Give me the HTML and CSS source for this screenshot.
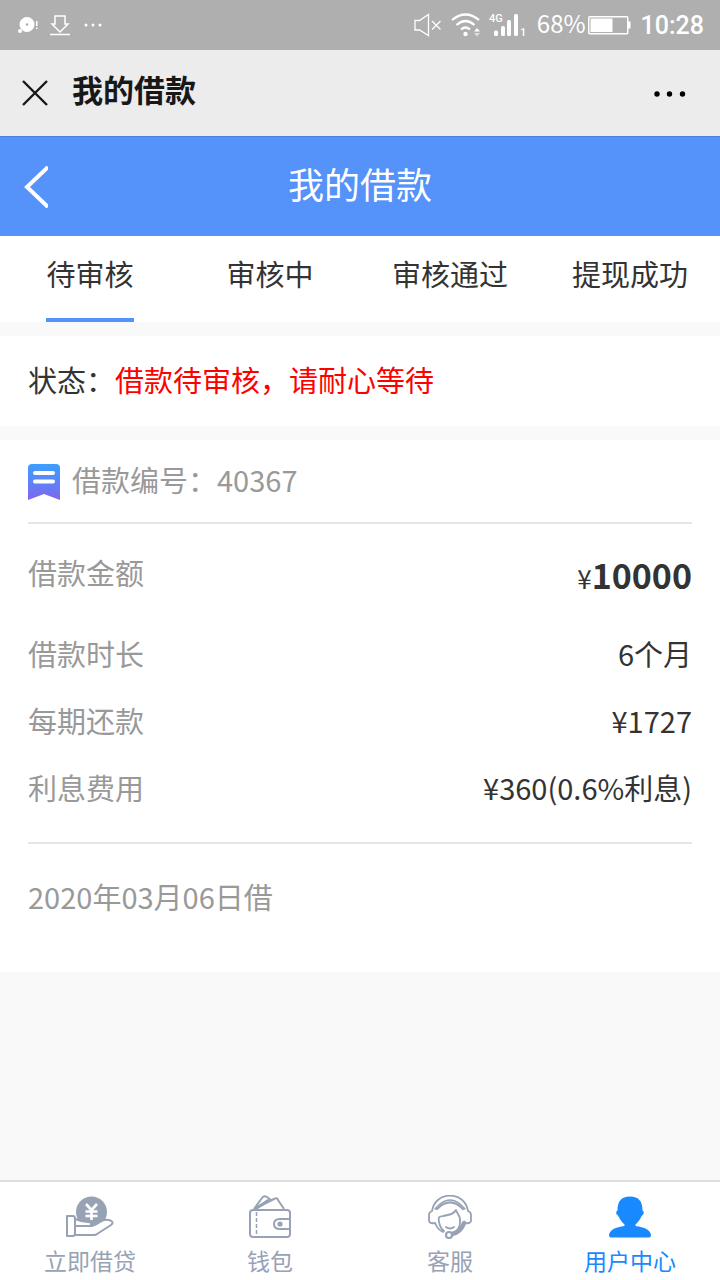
FILE: index.html
```html
<!DOCTYPE html>
<html lang="zh-CN">
<head>
<meta charset="utf-8">
<meta name="viewport" content="width=device-width, initial-scale=1">
<title>我的借款</title>
<link rel="stylesheet" href="styles.css">
</head>
<body>
<div class="page">
  <div class="status">
    <div class="status-left">
      <svg width="24" height="24" viewBox="0 0 24 24" fill="#fff"><path fill-rule="evenodd" d="M11 4a7.500 7.500 0 1 1 0 15a7.500 7.500 0 1 1 0-15zM11 10.200a1.300 1.300 0 1 0 0 2.600a1.300 1.300 0 1 0 0-2.600z"/><circle cx="4" cy="18" r="2"/><path d="M20 8h1.500v5H20zM20 14.500h1.500V16H20z"/></svg>
      <svg width="20" height="22" viewBox="0 0 20 22" fill="none" stroke="#fff" stroke-width="1.500"><path d="M5 2h10v8h3l-8 8-8-8h3zM0 20.500h20"/></svg>
      <svg width="18" height="6" viewBox="0 0 18 6" fill="#fff"><circle cx="2" cy="3" r="1.500"/><circle cx="9" cy="3" r="1.500"/><circle cx="16" cy="3" r="1.500"/></svg>
    </div>
    <div class="status-right">
      <svg width="28" height="24" viewBox="0 0 28 24" fill="none" stroke="#fff" stroke-width="1.300"><path d="M1 7.500h4.500L14.500 1.500v21L5.500 17H1zM18 8l8.500 8.500M26.500 8L18 16.500"/></svg>
      <svg class="wifi" width="30" height="24" viewBox="0 0 30 24" fill="none" stroke="#fff" stroke-width="2.200"><path d="M1 7q13.500-11 27 0M5.500 12q9-8 18 0M10 16.500q4.500-4 9 0"/><circle cx="14.500" cy="21" r="2.200" fill="#fff" stroke="none"/><path d="M23 18.500l3-3.500 3 3.500z" fill="#fff" stroke="none"/><path d="M23 20l3 3.500 3-3.500z" fill="#ddd" stroke="none"/></svg>
      <svg class="signal" width="38" height="26" viewBox="0 0 38 26" fill="#fff"><text x="0" y="10" class="signal-text">4G</text><rect x="5" y="18.500" width="4" height="5.500" rx="1.500"/><rect x="12" y="14" width="4" height="10" rx="1.500"/><rect x="18" y="8" width="4" height="16" rx="1.500"/><rect x="25" y="2" width="4" height="22" rx="1.500"/><text x="31" y="24" class="signal-text">1</text></svg>
      <span class="percent">68%</span>
      <svg width="43" height="20" viewBox="0 0 43 20"><rect x=".750" y="1.750" width="39" height="17" rx="1" fill="none" stroke="#fff" stroke-width="1.500"/><path fill="#fff" d="M2.500 3.500h22v13.500h-22zM40 6.500h2.500v7H40z"/></svg>
      <time class="clock">10:28</time>
    </div>
  </div>

  <header class="titlebar">
    <button class="icon-button" aria-label="关闭"><svg width="26" height="26" viewBox="0 0 26 26" stroke="#181818" stroke-width="2.400"><path d="M1 1l24 24M25 1L1 25"/></svg></button>
    <span class="titlebar-text">我的借款</span>
    <button class="icon-button more" aria-label="更多"><svg width="32" height="6" viewBox="0 0 32 6"><circle cx="3" cy="3" r="2.700"/><circle cx="15.500" cy="3" r="2.700"/><circle cx="28.500" cy="3" r="2.700"/></svg></button>
  </header>

  <div class="navbar">
    <button class="icon-button" aria-label="返回"><svg width="24" height="42" viewBox="0 0 24 42" fill="none" stroke="#fff" stroke-width="4"><path d="M24 1L3 21 24 41"/></svg></button>
    <h1 class="navbar-title">我的借款</h1>
  </div>

  <nav class="tabs">
    <a class="tab" href="#pending"><span class="tab-label active">待审核</span></a>
    <a class="tab" href="#reviewing"><span class="tab-label">审核中</span></a>
    <a class="tab" href="#approved"><span class="tab-label">审核通过</span></a>
    <a class="tab" href="#paid"><span class="tab-label">提现成功</span></a>
  </nav>

  <main class="content">
    <p class="notice">状态：<span class="alert">借款待审核，请耐心等待</span></p>
    <section class="card">
      <div class="card-head">
        <svg width="32" height="36" viewBox="0 0 32 36"><defs><linearGradient id="ribbon" x1="0" y1="0" x2="0" y2="1"><stop offset="0" stop-color="#3ba0ff"/><stop offset="1" stop-color="#8066ee"/></linearGradient></defs><path fill="url(#ribbon)" d="M4 0h24q4 0 4 4v32l-16-6-16 6V4q0-4 4-4z"/><path stroke="#fff" stroke-width="4" stroke-linecap="round" d="M7 9h18M7 17.500h18"/></svg>
        <span>借款编号：40367</span>
      </div>
      <dl class="details">
        <div class="row row-amount"><dt>借款金额</dt><dd>¥<strong>10000</strong></dd></div>
        <div class="row"><dt>借款时长</dt><dd>6个月</dd></div>
        <div class="row"><dt>每期还款</dt><dd>¥1727</dd></div>
        <div class="row"><dt>利息费用</dt><dd>¥360(0.6%利息)</dd></div>
      </dl>
      <p class="date">2020年03月06日借</p>
    </section>
  </main>

  <nav class="bottom">
    <a class="bottom-item" href="#loan">
      <svg width="48" height="44" viewBox="0 0 48 44" fill="none" stroke="#98a2b5" stroke-width="2" stroke-linejoin="round"><circle cx="25.500" cy="17" r="15.500" fill="#98a2b5" stroke="none"/><path d="M20 9l5.500 6L31 9M25.500 15v11M19.500 16.500h12M19.500 21h12" stroke="#fff" stroke-width="2.600"/><path fill="#fff" d="M9 24q7 3 16 3.500V31H9z"/><path fill="#fff" d="M9 31h17q4-1 8-4 4-3 9-2 6 2 2 5L31 39q-1 1-3 1H9z"/><path fill="#98a2b5" stroke="none" d="M17 26l9 1.500v3.500l8-4 2-2H17z"/><path fill="#fff" d="M1 21h6q2 0 2 3v14q0 3-2 3H1z"/></svg>
      <span>立即借贷</span></a>
    <a class="bottom-item" href="#wallet">
      <svg width="44" height="44" viewBox="0 0 44 44" fill="none" stroke="#98a2b5" stroke-width="2" stroke-linejoin="round"><rect x="2" y="15" width="40" height="27" rx="3"/><path d="M6 14L14 3q2-3 5-1l4 3M8 13L26 4q3-2 4 1l6 9"/><path d="M7 14L21 5" stroke-width="3"/><path d="M42 24H32q-6 0-6 5t6 5h10"/><path d="M8.500 17v24" stroke-dasharray="4 2" stroke-width="1.500"/><circle cx="32" cy="29" r="2.600" fill="#98a2b5" stroke="none"/></svg>
      <span>钱包</span></a>
    <a class="bottom-item" href="#service">
      <svg width="44" height="44" viewBox="0 0 44 44" fill="none" stroke="#98a2b5" stroke-width="1.800" stroke-linecap="round" stroke-linejoin="round"><path d="M4 16C7-4.500 37-4.500 40 16M4 16q-3 1-3 4v6q1 3 6 2M40 16q3 1 3 4v6q-1 3-6 2"/><path d="M7 14Q22-4 37 14" stroke-width="1.500"/><path d="M9 14Q22 1 35 14" stroke-width="2.200"/><path d="M7 28q3 7 8 9M11 27c-1-6 0-5 4-6 7-1 11-2 13-6 1 4 5 6 4 12 0 4-2 8-5 10M11 27q1 6 5 9M18 32q4 3 8 0"/><path d="M36 28q-3 9-12 11" stroke-width="4.500"/><circle cx="21" cy="40" r="3" fill="#fff" stroke-width="2.200"/></svg>
      <span>客服</span></a>
    <a class="bottom-item current" href="#user">
      <svg width="44" height="44" viewBox="0 0 44 44" fill="#1989ff"><path d="M22 1.500c9 0 12.500 5 12.500 14 2 1 1.500 4-.5 5-2 4-4 7-6.500 9v1.500c9 1 15 4 15.500 9q0 2.500-2 2.500H3q-2 0-2-2.500c.5-5 6.500-8 15.500-9v-1.500c-2.500-2-4.500-5-6.500-9-2-1-2.500-4-.5-5C9.500 6.500 13 1.500 22 1.500z"/></svg>
      <span>用户中心</span></a>
  </nav>
</div>
</body>
</html>
```
FILE: styles.css
```css
* { box-sizing: border-box; }
body {
  margin: 0;
  color: #333;
  background: #f9f9f9;
  font: 29px/44px "Noto Sans CJK SC", sans-serif;
}
h1, p, dl, dd { margin: 0; }
a { color: inherit; text-decoration: none; }
svg { display: block; flex: none; }
.page { display: flex; flex-direction: column; min-height: 100vh; }
.icon-button { padding: 0; border: 0; background: none; cursor: pointer; }

.status {
  display: flex;
  align-items: center;
  justify-content: space-between;
  height: 50px;
  padding: 0 16px;
  color: #fff;
  background: #afafaf;
}
.status-left { display: flex; align-items: center; gap: 10px; }
.status-left svg:last-child { margin-left: 4px; }
.status-right { display: flex; align-items: center; }
.wifi { margin-left: 9px; }
.signal { margin-left: 8px; }
.signal-text { font: 500 11px Roboto, sans-serif; }
.percent { margin: 0 2px 4px 10px; font-size: 24px; line-height: 30px; }
.clock { margin-left: 10px; padding-top: 2px; font: 500 25px/30px Roboto, sans-serif; }

.titlebar {
  display: flex;
  align-items: center;
  height: 86px;
  padding: 0 34px 0 22px;
  color: #181818;
  background: #ececec;
}
.titlebar-text { margin-left: 24px; padding-bottom: 8px; font-size: 31px; font-weight: 700; }
.more { margin-left: auto; padding-top: 2px; }

.navbar {
  display: grid;
  grid-template-columns: 24px 1fr 24px;
  align-items: center;
  height: 100px;
  padding: 0 24px;
  color: #fff;
  background: #5592fa;
  border-top: 1px solid #4a80dc;
}
.navbar-title { padding-bottom: 8px; font-size: 36px; font-weight: 400; text-align: center; }

.tabs { display: grid; grid-template-columns: repeat(4, 1fr); background: #fff; }
.tab { display: flex; justify-content: center; }
.tab-label { padding: 15px 0 23px; border-bottom: 4px solid transparent; }
.tab-label.active { border-color: #5592fa; }

.content { display: grid; gap: 14px; padding: 14px 0; }
.notice { padding: 21px 28px 25px; background: #fff; }
.alert { color: #f00; }
.card { padding: 0 28px; color: #999; background: #fff; }
.card-head {
  display: flex;
  align-items: center;
  gap: 12px;
  height: 84px;
  border-bottom: 2px solid #e6e6e6;
}
.card-head svg { margin-top: 2px; }
.card-head span { padding-bottom: 5px; }
.details { padding: 24px 0 33px; border-bottom: 2px solid #e6e6e6; }
.row { display: flex; align-items: center; justify-content: space-between; margin-top: 23px; }
.row-amount { margin: 0 0 36px; }
.row dd { color: #333; }
.row-amount dd { padding-top: 10px; font-size: 26px; line-height: 34px; }
.row-amount strong { font-size: 34px; }
.date { padding: 30px 0 54px; }

.bottom {
  display: grid;
  grid-template-columns: repeat(4, 1fr);
  height: 100px;
  margin-top: auto;
  color: #98a2b5;
  background: #fff;
  border-top: 2px solid #dedede;
}
.bottom-item {
  display: flex;
  flex-direction: column;
  align-items: center;
  gap: 6px;
  padding-top: 13px;
  font-size: 23px;
  line-height: 30px;
}
.current { color: #1989ff; }
```
